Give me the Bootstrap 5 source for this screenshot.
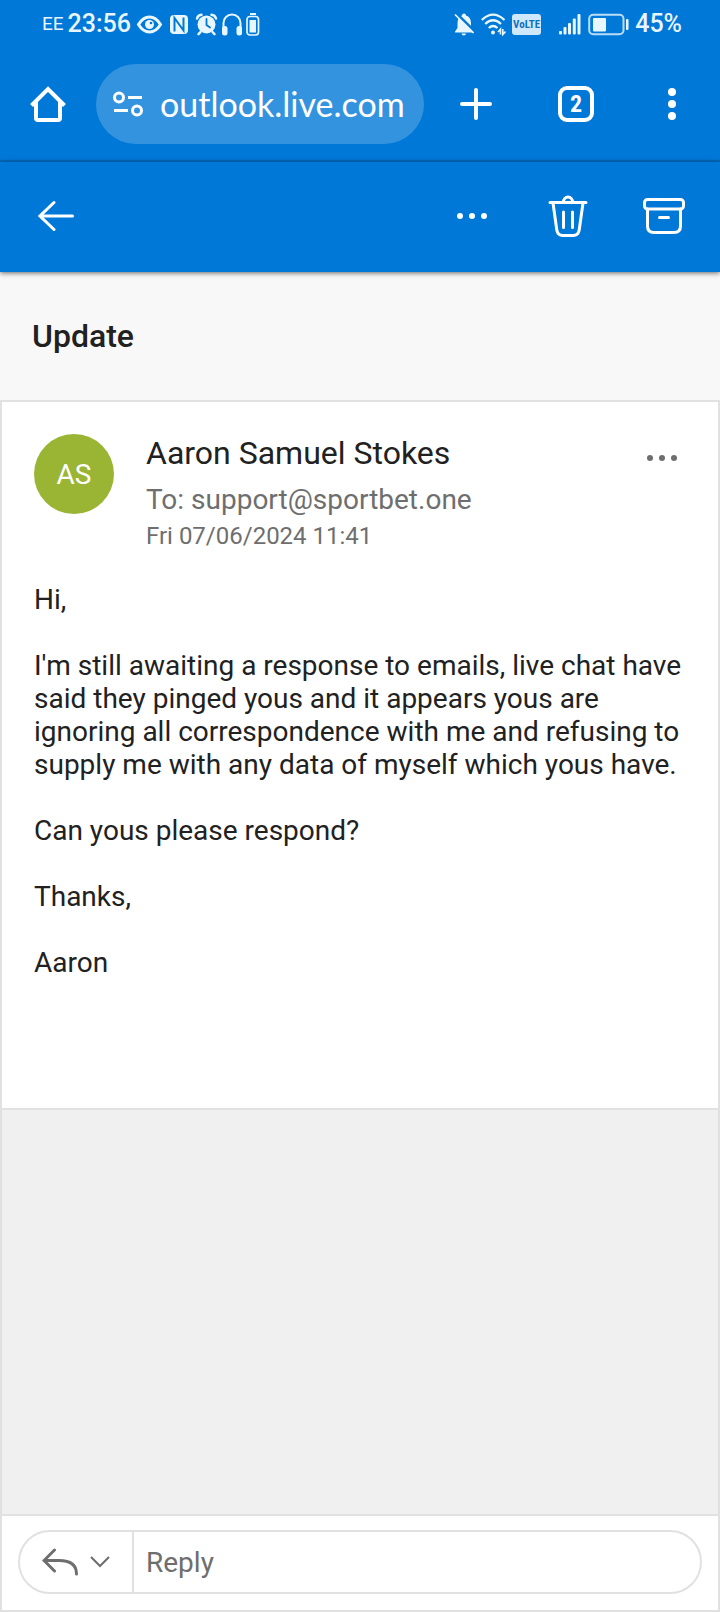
<!DOCTYPE html>
<html lang="en">
<head>
<meta charset="utf-8">
<meta name="viewport" content="width=device-width, initial-scale=1">
<title>Update - Outlook</title>
<link href="https://cdn.jsdelivr.net/npm/bootstrap@5.3.0/dist/css/bootstrap.min.css" rel="stylesheet">
<style>
  :root { --brand: #0078d7; --line: #e1e1e1; --ink: #212121; --muted: #6e6e6e; }
  body { font-family: Roboto, "Liberation Sans", sans-serif; font-size: 28px; line-height: 33px; color: var(--ink); background: #f0f0f0; }
  svg { display: block; flex: none; }
  .brand-bg { background: var(--brand); color: #fff; }
  .status-bar { height: 48px; padding: 0 38px 0 42px; font-size: 25px; font-weight: 500; line-height: 28px; color: #e8f6ff; }
  .status-left { gap: 4px; }
  .status-right { gap: 6px; }
  .carrier { font-size: 19px; font-weight: 400; }
  .volte { width: 29px; height: 21px; border-radius: 3px; background: #cfe8fb; color: #0f6fc0; font: bold 11px/21px "Roboto Condensed", "Liberation Sans Narrow", Roboto, sans-serif; }
  .icon-btn { flex: none; width: 96px; height: 80px; padding: 0; border: 0; border-radius: 0; color: inherit; display: flex; align-items: center; justify-content: center; }
  .icon-btn:hover { color: inherit; }
  .icon-btn.wide { width: 104px; }
  .browser-bar { height: 114px; padding: 16px 0; border-bottom: 2px solid #006cc5; }
  .address { flex: 1 1 0; height: 80px; background: #3393df; padding: 0 16px; gap: 16px; min-width: 0; }
  .address input { flex: 1 1 0; color: #fff; font-family: Lato, sans-serif; font-size: 34px; line-height: 40px; min-width: 0; }
  .tab-count { width: 36px; height: 36px; border: 4px solid #fff; border-radius: 9px; font: bold 24px/28px "Roboto Condensed", "Liberation Sans Narrow", Roboto, sans-serif; }
  .mail-bar { height: 110px; padding: 0 8px 2px; box-shadow: 0 1px 5px rgba(0,0,0,.6); z-index: 1; }
  .subject-bar { height: 128px; padding: 0 32px; background: #f8f8f8; }
  .subject-bar h1 { font-size: 32px; line-height: 36px; font-weight: 500; }
  .mail-pane { border: 2px solid var(--line); }
  .message { padding: 32px 32px 129px; border-bottom: 2px solid var(--line); }
  .avatar { width: 80px; height: 80px; background: #9ab433; color: #fff; font-size: 28px; }
  .sender { font-size: 32px; line-height: 38px; }
  .recipient { margin: 12px 0 4px; line-height: 32px; color: var(--muted); }
  .sent { font-size: 24px; line-height: 32px; color: var(--muted); }
  .more { width: 32px; height: 48px; color: var(--muted); }
  .message-text { padding-top: 31px; }
  .message-text p { margin-bottom: 33px; }
  .reply-bar { padding: 14px 16px 16px; border-top: 2px solid var(--line); }
  .reply-box { height: 64px; border: 2px solid var(--line); color: var(--muted); overflow: hidden; }
  .reply-box .icon-btn { width: auto; height: 60px; padding: 0 6px 0 22px; }
  .reply-box .options-btn { padding: 0 22px 0 6px; }
  .reply-box input { padding: 0 12px; font-size: 28px; color: var(--ink); border-left: 2px solid var(--line) !important; }
  .reply-box input::placeholder { color: var(--muted); opacity: 1; }
</style>
</head>
<body>
<div class="d-flex flex-column min-vh-100">
  <header class="brand-bg">
    <div class="status-bar d-flex justify-content-between align-items-center">
      <div class="status-left d-flex align-items-center">
        <span class="carrier">EE</span>
        <span>23:56</span>
        <svg width="29" height="28" viewBox="0 0 29 28" fill="none" stroke="currentColor" stroke-width="3"><path d="M3.500 14.500Q8 7 14.500 7T25.500 14.500Q21 22 14.500 22T3.500 14.500Z"/><circle cx="14.500" cy="14.500" r="4.500" fill="currentColor" stroke="none"/><circle cx="16" cy="13" r="1.300" fill="#0078d7" stroke="none"/></svg>
        <svg width="22" height="28" viewBox="0 0 22 28"><rect x="2" y="5" width="18" height="19" rx="4" fill="currentColor"/><path d="M6.500 21.500V8L15.500 20.500V7.500" fill="none" stroke="#0078d7" stroke-width="2"/></svg>
        <svg width="24" height="28" viewBox="0 0 24 28" fill="none" stroke="currentColor" stroke-width="2.500" stroke-linecap="round"><circle cx="12.500" cy="14.500" r="9" fill="currentColor" stroke="none"/><path d="M3 8.500Q4 5 7.500 4.800M22 8.500Q21 5 17.500 4.800M6.500 22l-2 2.200M18.500 22l2 2.200"/><path d="M12.500 9v6l3.500 2.500" stroke="#0078d7" stroke-width="1.800"/></svg>
        <svg width="20" height="28" viewBox="0 0 20 28"><path d="M1.500 20V13a8.500 8.500 0 0 1 17 0v7" fill="none" stroke="currentColor" stroke-width="2"/><rect x="0" y="16" width="5.500" height="9.500" rx="2.500" fill="currentColor"/><rect x="14.500" y="16" width="5.500" height="9.500" rx="2.500" fill="currentColor"/></svg>
        <svg width="14" height="28" viewBox="0 0 14 28"><path d="M4 4h6" stroke="currentColor" stroke-width="2"/><rect x="1" y="6.500" width="11.500" height="18.500" rx="3" fill="none" stroke="currentColor" stroke-width="1.700"/><rect x="3.500" y="10" width="6.500" height="12.500" fill="currentColor"/></svg>
      </div>
      <div class="status-right d-flex align-items-center">
        <svg width="21" height="28" viewBox="0 0 21 28"><path d="M10 3.500q2 0 2 2Q17 7 17 13v5l2.500 3.500V22.500H1V21.500L3.500 18v-5q0-6 4.500-7.500 0-2 2-2ZM7.500 23.500h4.500q0 2-2.200 2t-2.300-2Z" fill="currentColor"/><path d="M2.500 3.500L21 21.500" stroke="#0078d7" stroke-width="2.500"/><path d="M1 4.500L19.500 23" stroke="currentColor" stroke-width="1.700"/></svg>
        <svg width="25" height="28" viewBox="0 0 25 28" fill="none" stroke="currentColor" stroke-width="2.300"><path d="M.8 10Q12-.8 23.500 10M4.200 14Q12 6.500 20 14M7.800 18Q12 14 16.500 18"/><circle cx="12" cy="22.500" r="2" fill="currentColor" stroke="none"/><path d="M17 22l2.500-2.800V24.500M21.800 19v5.500l2.700-3" stroke-width="1.600"/></svg>
        <span class="volte d-flex justify-content-center">VoLTE</span>
        <svg width="35" height="28" viewBox="0 0 35 28" fill="currentColor"><rect x="12" y="21" width="3" height="3.500" rx="1"/><rect x="16.500" y="17" width="3" height="7.500" rx="1"/><rect x="21" y="13" width="3" height="11.500" rx="1"/><rect x="25.800" y="8.500" width="3" height="16" rx="1"/><rect x="30.500" y="4" width="3" height="20.500" rx="1"/></svg>
        <svg width="41" height="28" viewBox="0 0 41 28"><rect x="1.200" y="4.700" width="34.300" height="19.600" rx="4" fill="none" stroke="currentColor" stroke-opacity=".8" stroke-width="2"/><rect x="5" y="8" width="13" height="13.500" rx="1" fill="currentColor"/><rect x="38" y="9" width="2.500" height="11" rx="1" fill="currentColor"/></svg>
        <span>45%</span>
      </div>
    </div>

    <div class="browser-bar d-flex align-items-center">
      <button class="btn icon-btn" type="button" aria-label="Home">
        <svg width="36" height="36" viewBox="0 0 36 36" fill="none" stroke="currentColor" stroke-width="4"><path d="M1.500 19.500L18 3l16.500 16.500M6 16V32q0 2 2 2H28q2 0 2-2V16"/></svg>
      </button>
      <div class="address d-flex align-items-center rounded-pill">
        <svg width="32" height="32" viewBox="0 0 32 32" fill="none" stroke="currentColor" stroke-width="3"><circle cx="7" cy="9.500" r="4.500"/><path d="M16 9.500h14M2 22.500h14"/><circle cx="25" cy="22.500" r="4.500"/></svg>
        <input class="bg-transparent border-0 p-0" type="text" aria-label="Address" value="outlook.live.com">
      </div>
      <button class="btn icon-btn wide" type="button" aria-label="New tab">
        <svg width="32" height="32" viewBox="0 0 32 32" stroke="currentColor" stroke-width="4" stroke-linecap="round"><path d="M16 2v28M2 16h28"/></svg>
      </button>
      <button class="btn icon-btn" type="button" aria-label="Open tabs"><span class="tab-count">2</span></button>
      <button class="btn icon-btn" type="button" aria-label="Browser menu">
        <svg width="8" height="32" viewBox="0 0 8 32" fill="currentColor"><circle cx="4" cy="4" r="4"/><circle cx="4" cy="16" r="4"/><circle cx="4" cy="28" r="4"/></svg>
      </button>
    </div>
  </header>

  <nav class="mail-bar brand-bg d-flex align-items-center position-relative">
    <button class="btn icon-btn me-auto" type="button" aria-label="Back">
      <svg width="36" height="32" viewBox="0 0 36 32" fill="none" stroke="currentColor" stroke-width="3" stroke-linecap="round"><path d="M34.500 16H2M16 2.500L2 16l14 13.500"/></svg>
    </button>
    <button class="btn icon-btn" type="button" aria-label="More actions">
      <svg width="30" height="6" viewBox="0 0 30 6" fill="currentColor"><circle cx="3" cy="3" r="3"/><circle cx="15" cy="3" r="3"/><circle cx="27" cy="3" r="3"/></svg>
    </button>
    <button class="btn icon-btn" type="button" aria-label="Delete">
      <svg width="40" height="42" viewBox="0 0 40 42" fill="none" stroke="currentColor" stroke-width="3" stroke-linecap="round"><path d="M2 7.500h36M15.500 7a4.500 5 0 0 1 9 0M5 8l3.800 27q.8 5.500 6 5.500h10.400q5.200 0 6-5.500L35 8M15.500 17v15.500M24.500 17v15.500"/></svg>
    </button>
    <button class="btn icon-btn" type="button" aria-label="Archive">
      <svg width="42" height="36" viewBox="0 0 42 36" fill="none" stroke="currentColor" stroke-width="3" stroke-linecap="round"><rect x="1.500" y="1.500" width="39" height="9.500" rx="3"/><path d="M4.500 11v17q0 6.500 6.500 6.500h20q6.500 0 6.500-6.500V11M16.500 19.500h9"/></svg>
    </button>
  </nav>

  <div class="subject-bar d-flex align-items-center">
    <h1 class="m-0">Update</h1>
  </div>

  <main class="mail-pane d-flex flex-column flex-fill">
    <article class="message bg-white">
      <div class="d-flex align-items-start">
        <div class="avatar rounded-circle d-flex align-items-center justify-content-center me-3 flex-shrink-0">AS</div>
        <div class="flex-fill ms-3">
          <div class="sender">Aaron Samuel Stokes</div>
          <div class="recipient">To: support@sportbet.one</div>
          <div class="sent">Fri 07/06/2024 11:41</div>
        </div>
        <button class="btn icon-btn more me-2" type="button" aria-label="Message actions">
          <svg width="30" height="6" viewBox="0 0 30 6" fill="currentColor"><circle cx="3" cy="3" r="3"/><circle cx="15" cy="3" r="3"/><circle cx="27" cy="3" r="3"/></svg>
        </button>
      </div>
      <div class="message-text">
        <p>Hi,</p>
        <p>I'm still awaiting a response to emails, live chat have said they pinged yous and it appears yous are ignoring all correspondence with me and refusing to supply me with any data of myself which yous have.</p>
        <p>Can yous please respond?</p>
        <p>Thanks,</p>
        <p class="mb-0">Aaron</p>
      </div>
    </article>

    <form class="reply-bar bg-white mt-auto">
      <div class="reply-box d-flex rounded-pill">
        <button class="btn icon-btn" type="button" aria-label="Reply">
          <svg width="36" height="28" viewBox="0 0 36 28" fill="none" stroke="currentColor" stroke-width="3" stroke-linecap="round"><path d="M12.500 2L2 12.500 12.500 23M2 12.500h15q17.500 0 17.500 13.500"/></svg>
        </button>
        <button class="btn icon-btn options-btn" type="button" aria-label="Reply options">
          <svg width="20" height="12" viewBox="0 0 20 12" fill="none" stroke="currentColor" stroke-width="2"><path d="M1 1l9 9 9-9"/></svg>
        </button>
        <input class="border-0 flex-fill bg-transparent" type="text" placeholder="Reply" aria-label="Reply message">
      </div>
    </form>
  </main>
</div>
<script src="https://cdn.jsdelivr.net/npm/bootstrap@5.3.0/dist/js/bootstrap.bundle.min.js"></script>
</body>
</html>
